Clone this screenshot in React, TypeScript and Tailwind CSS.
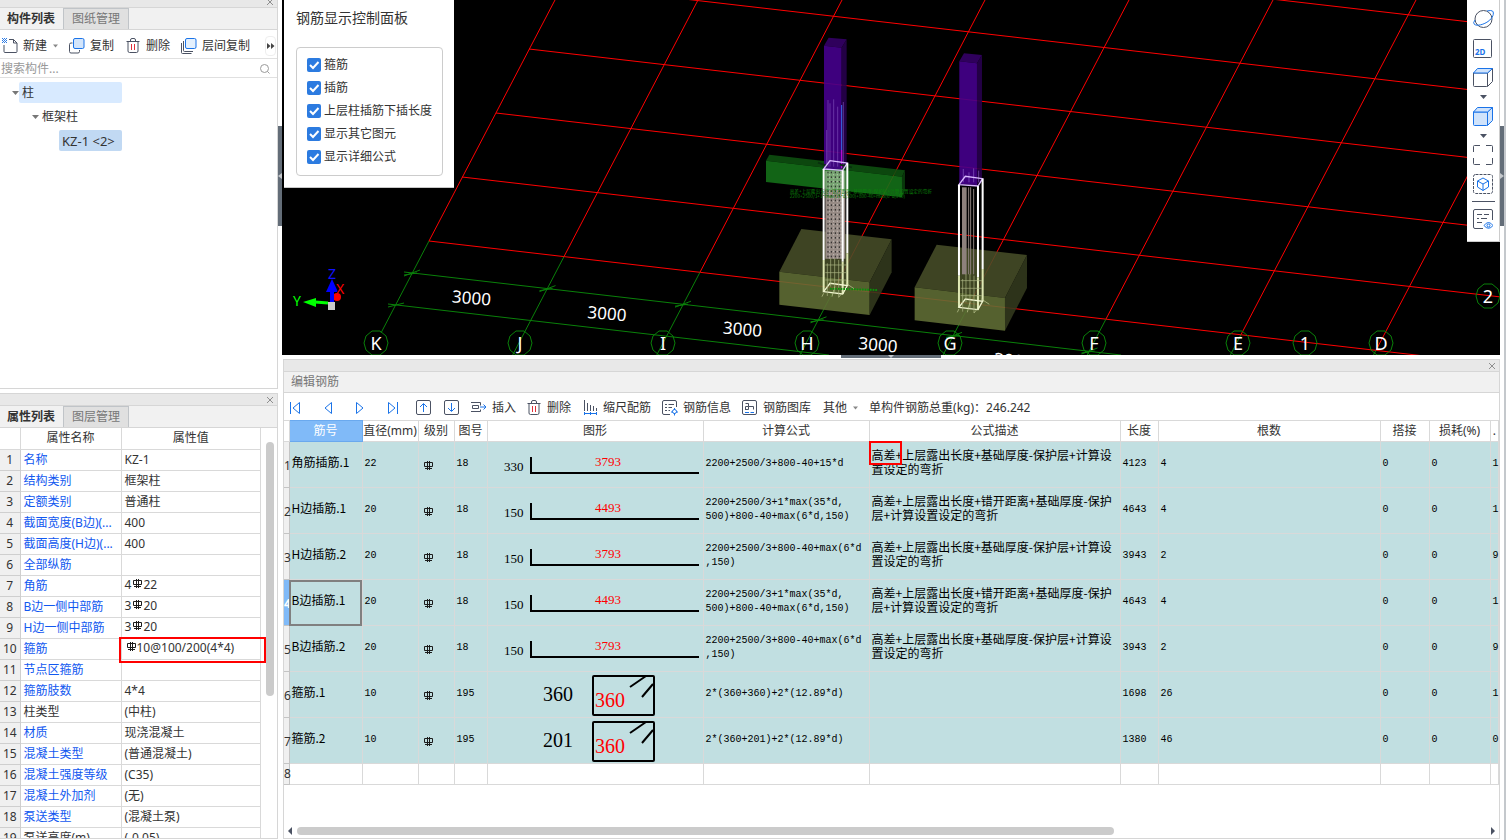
import type { ReactNode } from 'react';
import clsx from 'clsx';

type IconProps = { className?: string };

type Shape =
  | { kind: 'hook'; side: string; length: string }
  | { kind: 'stirrup'; side: string; length: string };

type RebarRow = {
  name: string;
  diameter: string;
  code: string;
  shape: Shape;
  formula: string[];
  description: string[];
  length: string;
  count: string;
  weight: string;
};

type PropertyRow = {
  name: string;
  value: string;
  rebar?: boolean;
  prefix?: string;
  plain?: boolean;
  marked?: boolean;
};

const DESC_BASE = ['高差+上层露出长度+基础厚度-保护层+计算设', '置设定的弯折'];
const DESC_STAGGERED = ['高差+上层露出长度+错开距离+基础厚度-保护', '层+计算设置设定的弯折'];
const FORMULA_SHORT = ['2200+2500/3+800-40+max(6*d', ',150)'];
const FORMULA_LONG = ['2200+2500/3+1*max(35*d,', '500)+800-40+max(6*d,150)'];

const REBARS: RebarRow[] = [
  { name: '角筋插筋.1', diameter: '22', code: '18', shape: { kind: 'hook', side: '330', length: '3793' }, formula: ['2200+2500/3+800-40+15*d'], description: DESC_BASE, length: '4123', count: '4', weight: '1' },
  { name: 'H边插筋.1', diameter: '20', code: '18', shape: { kind: 'hook', side: '150', length: '4493' }, formula: FORMULA_LONG, description: DESC_STAGGERED, length: '4643', count: '4', weight: '1' },
  { name: 'H边插筋.2', diameter: '20', code: '18', shape: { kind: 'hook', side: '150', length: '3793' }, formula: FORMULA_SHORT, description: DESC_BASE, length: '3943', count: '2', weight: '9' },
  { name: 'B边插筋.1', diameter: '20', code: '18', shape: { kind: 'hook', side: '150', length: '4493' }, formula: FORMULA_LONG, description: DESC_STAGGERED, length: '4643', count: '4', weight: '1' },
  { name: 'B边插筋.2', diameter: '20', code: '18', shape: { kind: 'hook', side: '150', length: '3793' }, formula: FORMULA_SHORT, description: DESC_BASE, length: '3943', count: '2', weight: '9' },
  { name: '箍筋.1', diameter: '10', code: '195', shape: { kind: 'stirrup', side: '360', length: '360' }, formula: ['2*(360+360)+2*(12.89*d)'], description: [], length: '1698', count: '26', weight: '1' },
  { name: '箍筋.2', diameter: '10', code: '195', shape: { kind: 'stirrup', side: '201', length: '360' }, formula: ['2*(360+201)+2*(12.89*d)'], description: [], length: '1380', count: '46', weight: '0' },
];

const PROPERTIES: PropertyRow[] = [
  { name: '名称', value: 'KZ-1' },
  { name: '结构类别', value: '框架柱' },
  { name: '定额类别', value: '普通柱' },
  { name: '截面宽度(B边)(...', value: '400' },
  { name: '截面高度(H边)(...', value: '400' },
  { name: '全部纵筋', value: '' },
  { name: '角筋', prefix: '4', value: '22', rebar: true },
  { name: 'B边一侧中部筋', prefix: '3', value: '20', rebar: true },
  { name: 'H边一侧中部筋', prefix: '3', value: '20', rebar: true },
  { name: '箍筋', value: '10@100/200(4*4)', rebar: true, marked: true },
  { name: '节点区箍筋', value: '' },
  { name: '箍筋肢数', value: '4*4' },
  { name: '柱类型', value: '(中柱)', plain: true },
  { name: '材质', value: '现浇混凝土' },
  { name: '混凝土类型', value: '(普通混凝土)' },
  { name: '混凝土强度等级', value: '(C35)' },
  { name: '混凝土外加剂', value: '(无)' },
  { name: '泵送类型', value: '(混凝土泵)' },
  { name: '泵送高度(m)', value: '(-0.05)', plain: true },
];

const DISPLAY_OPTIONS = ['箍筋', '插筋', '上层柱插筋下插长度', '显示其它图元', '显示详细公式'];

const COLUMNS = ['筋号', '直径(mm)', '级别', '图号', '图形', '计算公式', '公式描述', '长度', '根数', '搭接', '损耗(%)', '.'];

/* ---------- icons ---------- */

function NewIcon() {
  return (
    <svg width="16" height="16" viewBox="0 0 16 16" fill="none" stroke="#4b5263">
      <path d="M7 1.500h4.500l3.500 3.500v8.500q0 1-1 1h-11q-1 0-1-1V7M11.500 1.500V5H15" />
      <path d="M0 .5h6M0 2.500h6M0 4.500h6" stroke="#2c7be5" strokeDasharray="1 1" />
      <path d="M1 1.500h4M1 3.500h4" stroke="#2c7be5" strokeDasharray="1 1" />
    </svg>
  );
}

function CopyIcon() {
  return (
    <svg width="16" height="16" viewBox="0 0 16 16" fill="none">
      <path d="M3.500 5H2q-1.500 0-1.500 1.500v7q0 1.500 1.500 1.500h7q1.500 0 1.500-1.500V12" stroke="#4b5263" />
      <rect x="4.500" y=".5" width="10.500" height="10" rx="1.500" fill="#d3e5fb" stroke="#1a73e8" />
    </svg>
  );
}

function LayerCopyIcon() {
  return (
    <svg width="16" height="16" viewBox="0 0 16 16" fill="none">
      <path d="M2.500 3v9.500q0 1 1 1h8.500M.5 5v9.500q0 1 1 1h9" stroke="#4b5263" />
      <rect x="4.500" y=".5" width="10.500" height="10" rx="1.500" fill="#e4f0fd" stroke="#1a73e8" />
    </svg>
  );
}

function TrashIcon() {
  return (
    <svg width="15" height="16" viewBox="0 0 15 16" fill="none" stroke="#4b5263">
      <path d="M.5 3.500h13M4.500 3.500V2q0-1.500 1.500-1.500h2q1.500 0 1.500 1.500v1.500M2 3.500v9.500q0 1.500 1.500 1.500h7q1.500 0 1.500-1.500v-9.500" />
      <path d="M5.500 6v6M8.500 6v6" stroke="#e0303a" />
    </svg>
  );
}

function Caret({ className }: IconProps) {
  return (
    <svg className={className} width="7" height="4" viewBox="0 0 7 4" fill="currentColor">
      <path d="M0 0h7L3.500 4z" />
    </svg>
  );
}

function CloseIcon() {
  return (
    <svg width="8" height="8" viewBox="0 0 8 8" stroke="#8f8f8f">
      <path d="M1 1l6 6M7 1L1 7" />
    </svg>
  );
}

function SearchIcon() {
  return (
    <svg width="12" height="12" viewBox="0 0 12 12" fill="none" stroke="#9a9a9a">
      <circle cx="5.500" cy="5.500" r="4" />
      <path d="M8.500 8.500l2 2" />
    </svg>
  );
}

function StepIcon({ direction, edge }: { direction: 'prev' | 'next'; edge?: boolean }) {
  return (
    <svg
      className={clsx(direction === 'next' && 'rotate-180')}
      width="16"
      height="16"
      viewBox="0 0 16 16"
      fill="none"
      stroke="#1a73e8"
    >
      {edge && <path d="M2.500 2v12" />}
      <path d="M11.500 2.500v11L5 8z" />
    </svg>
  );
}

function MoveIcon({ down }: { down?: boolean }) {
  return (
    <svg width="16" height="16" viewBox="0 0 16 16" fill="none">
      <rect x=".5" y=".5" width="14" height="14" rx="1.500" stroke="#4b5263" />
      <path d={down ? 'M7.500 3V11M4 8l3.500 3.500L11 8' : 'M7.500 12V4M4 7l3.500-3.500L11 7'} stroke="#1a73e8" />
    </svg>
  );
}

function InsertIcon() {
  return (
    <svg width="16" height="14" viewBox="0 0 16 14" fill="none">
      <path d="M0 1.500h9.500v3M0 10.500h9.500v-2M1.500 4.500h6v3h-6z" stroke="#4b5263" />
      <path d="M9 6h6M12.500 3.500L15 6 12.500 8.500" stroke="#1a73e8" />
    </svg>
  );
}

function ScaleIcon() {
  return (
    <svg width="15" height="16" viewBox="0 0 15 16" fill="none">
      <path d="M1.500 0v11M4.500 3v8M7.500 5v6M10.500 6v5M13.500 8v3" stroke="#4b5263" />
      <path d="M1 13.500h13M1.500 12v3M13.500 12v3M7.500 12v3" stroke="#1a73e8" />
    </svg>
  );
}

function InfoIcon() {
  return (
    <svg width="16" height="16" viewBox="0 0 16 16" fill="none">
      <path d="M8 14.500H2q-1.500 0-1.500-1.500V2Q.5.500 2 .500h11q1.500 0 1.500 1.500v5" stroke="#4b5263" />
      <path d="M3 4.500h2M6.500 4.500H12M3 7.500h2M6.500 7.500H10M3 10.500h2M6.500 10.500H8" stroke="#4b5263" />
      <path d="M12.500 8v2M12.500 13v2.500M9 12h2M14 12h2" stroke="#1a73e8" />
      <circle cx="12.500" cy="11.500" r="2" stroke="#1a73e8" />
    </svg>
  );
}

function LibraryIcon() {
  return (
    <svg width="16" height="16" viewBox="0 0 16 16" fill="none">
      <rect x=".5" y=".5" width="14" height="14" rx="1.500" stroke="#4b5263" />
      <path d="M3.500 3.500h3v3M3 9.500h3.500v-3h-3v3M6.500 6.500h5v3" stroke="#4b5263" />
      <path d="M3 12.500h4M8.500 12.500H12" stroke="#1a73e8" />
    </svg>
  );
}

// Symbol of an HRB400 bar
function RebarIcon({ className }: IconProps) {
  return (
    <svg className={clsx('inline-block', className)} width="9" height="9" viewBox="0 0 9 9" fill="none" stroke="#1c1c1c">
      <path d="M3.500 0v9M5.500 0v9M.5 1.500h8v4h-8zM1 7.500h7" />
    </svg>
  );
}

function CubeIcon({ filled }: { filled?: boolean }) {
  return (
    <svg width="20" height="20" viewBox="0 0 20 20" fill="none" stroke={filled ? '#1a73e8' : '#4b5263'}>
      <path
        d="M.5 6h14v12.500q0 1-1 1h-12q-1 0-1-1zM14.500 6l5-4.500v13l-5 5z"
        fill={filled ? '#d0e3fb' : 'none'}
        strokeLinejoin="round"
      />
      <path d="M.5 6l4-4.500h15l-5 4.500z" fill="#d0e3fb" stroke="#1a73e8" strokeLinejoin="round" />
    </svg>
  );
}

function OrbitIcon() {
  return (
    <svg width="21" height="20" viewBox="0 0 21 20" fill="none">
      <circle cx="10.500" cy="10" r="8.500" stroke="#4b5263" />
      <path d="M2 11Q-.5 14 1.500 15.500C4 17 10 16 15 12.500S21.500 4 19.500 2Q18 1 14 2" stroke="#1a73e8" />
    </svg>
  );
}

function FlatIcon() {
  return (
    <svg width="20" height="20" viewBox="0 0 20 20" fill="none">
      <rect x=".5" y=".5" width="18" height="18" rx="1" stroke="#4b5263" />
      <text x="2" y="16" fill="#1a73e8" className="font-['Noto_Sans',sans-serif] text-[8px] font-bold">2D</text>
    </svg>
  );
}

function FrameIcon() {
  return (
    <svg width="20" height="20" viewBox="0 0 20 20" fill="none" stroke="#4b5263">
      <path d="M.5 7V1.500q0-1 1-1H7M13 .5h5.500q1 0 1 1V7M19.500 13v5.500q0 1-1 1H13M7 19.500H1.500q-1 0-1-1V13" />
    </svg>
  );
}

function IsolateIcon() {
  return (
    <svg width="20" height="20" viewBox="0 0 20 20" fill="none">
      <rect x=".5" y=".5" width="19" height="19" rx="2" stroke="#4b5263" strokeDasharray="3 1" />
      <path d="M10 4l5.500 3v6L10 16.500 4.500 13V7zM4.500 7L10 10l5.500-3M10 10v6.500" stroke="#1a73e8" />
    </svg>
  );
}

function ViewListIcon() {
  return (
    <svg width="20" height="20" viewBox="0 0 20 20" fill="none">
      <path d="M10 19.500H2q-1.500 0-1.500-1.500V2Q.5.500 2 .500h16q1.500 0 1.500 1.500v9" stroke="#4b5263" />
      <path d="M4 5.500h5M11 5.500h5M4 9.500h2M8 9.500h6M4 13.500h5" stroke="#4b5263" />
      <path d="M11 16.500q4.500-6 9 0-4.500 5.500-9 0z" stroke="#1a73e8" />
      <circle cx="15.500" cy="16.500" r="1.500" stroke="#1a73e8" />
    </svg>
  );
}

/* ---------- shared ---------- */

function PanelTitleBar() {
  return (
    <div className="flex justify-end items-center bg-[#e8e8e8] pr-[3px] border-[#d6d6d6] border-y h-[13px] shrink-0">
      <button type="button" aria-label="关闭"><CloseIcon /></button>
    </div>
  );
}

function PanelTabs({ tabs }: { tabs: [string, string] }) {
  return (
    <div className="flex bg-[#f1f1f1] border-[#d6d6d6] border-b h-[22px] shrink-0">
      <button type="button" className="pr-2 pl-[7px] border-[#c0c4c8] border-r font-bold text-[#333] whitespace-nowrap">
        {tabs[0]}
      </button>
      <button type="button" className="bg-[#e0e0e0] px-2 border-[#c0c4c8] border-t border-r text-[#777] whitespace-nowrap">
        {tabs[1]}
      </button>
    </div>
  );
}

function ToolButton({ icon, children, className }: { icon: ReactNode; children: ReactNode; className?: string }) {
  return (
    <button type="button" className={clsx('flex items-center gap-[5px] whitespace-nowrap', className)}>
      {icon}
      {children}
    </button>
  );
}

/* ---------- left side ---------- */

function ComponentPanel() {
  return (
    <section className="flex flex-col border-[#d6d6d6] border-r border-b min-h-0 overflow-hidden">
      <div className="flex justify-end items-center bg-[#e8e8e8] pr-[3px] pb-1 border-[#d6d6d6] border-b h-2 shrink-0">
        <button type="button" aria-label="关闭"><CloseIcon /></button>
      </div>
      <PanelTabs tabs={['构件列表', '图纸管理']} />

      <div className="flex items-center pt-[3px] pl-[2px] border-[#e0e0e0] border-b h-[29px] shrink-0">
        <ToolButton icon={<NewIcon />}>
          新建
          <Caret className="ml-[1px] w-[5px] text-[#888]" />
        </ToolButton>
        <ToolButton icon={<CopyIcon />} className="ml-[11px]">复制</ToolButton>
        <ToolButton icon={<TrashIcon />} className="ml-3">删除</ToolButton>
        <ToolButton icon={<LayerCopyIcon />} className="ml-[11px]">层间复制</ToolButton>
        <button type="button" aria-label="更多" className="flex justify-center items-center ml-auto mr-[1px] border border-[#eee] rounded w-[11px] h-5">
          <svg width="8" height="6" viewBox="0 0 8 6" fill="#444">
            <path d="M0 0l3.500 3L0 6zM4 0l3.500 3L4 6z" />
          </svg>
        </button>
      </div>

      <label className="flex items-center pt-[1px] pr-[6px] border-[#e0e0e0] border-b h-[19px] shrink-0">
        <span className="sr-only">搜索构件</span>
        <input
          type="text"
          placeholder="搜索构件..."
          className="flex-1 pl-[1px] outline-none min-w-0 h-[18px] placeholder:text-[#999] leading-[18px]"
        />
        <SearchIcon />
      </label>

      <ul className="flex flex-col gap-[3px] pt-1 text-[#333]">
        <li className="flex items-center pl-3">
          <Caret className="text-[#777]" />
          <button type="button" className="pl-[3px] rounded-xs bg-[#d8eaff] w-[103px] h-[21px] text-left">柱</button>
        </li>
        <li className="flex items-center gap-[3px] pl-8 h-[21px]">
          <Caret className="text-[#777]" />
          <button type="button">框架柱</button>
        </li>
        <li className="pl-[59px]">
          <button type="button" className="pl-[3px] rounded-xs bg-[#c1d9f3] w-[63px] h-[21px] text-[13px] text-left whitespace-nowrap">
            KZ-1 &lt;2&gt;
          </button>
        </li>
      </ul>
    </section>
  );
}

function PropertyPanel() {
  return (
    <section className="flex flex-col border-[#d6d6d6] border-r border-b min-h-0 overflow-hidden">
      <PanelTitleBar />
      <PanelTabs tabs={['属性列表', '图层管理']} />

      <div className="flex flex-1 min-h-0">
        <div className="flex-1 min-w-0">
          <table className="w-full text-[#333] border-collapse table-fixed">
            <colgroup>
              <col className="w-5" />
              <col className="w-[101px]" />
              <col />
            </colgroup>
            <thead>
              <tr className="h-[21px]">
                <th className="border-[#d9d9d9] border-r border-b" aria-label="序号" />
                <th className="p-0 border-[#d9d9d9] border-r border-b font-normal">属性名称</th>
                <th className="p-0 border-[#d9d9d9] border-r border-b font-normal">属性值</th>
              </tr>
            </thead>
            <tbody>
              {PROPERTIES.map((row, index) => (
                <tr key={row.name} className="h-[21px]">
                  <td className="bg-[#f0f0f0] p-0 border-[#cfcfcf] border-r border-b text-center">{index + 1}</td>
                  <td
                    className={clsx(
                      'p-0 pl-[3px] border-[#d9d9d9] border-r border-b whitespace-nowrap overflow-hidden',
                      !row.plain && 'text-[#1158f0]',
                    )}
                  >
                    {row.name}
                  </td>
                  <td className="relative p-0 pl-[3px] border-[#d9d9d9] border-r border-b whitespace-nowrap">
                    {row.prefix}
                    {row.rebar && <RebarIcon className="mr-[1px] mb-[6px] ml-[2px]" />}
                    {row.value}
                    {row.marked && (
                      <span className="-top-[2px] -right-[6px] -bottom-[4px] -left-[3px] z-10 absolute border-[#f00] border-2" />
                    )}
                  </td>
                </tr>
              ))}
            </tbody>
          </table>
        </div>
        <div className="pt-[14px] pl-[5px] w-4 shrink-0">
          <div className="bg-[#cbcbcb] rounded-full w-2 h-[254px]" />
        </div>
      </div>
    </section>
  );
}

/* ---------- 3D view ---------- */

const AXIS_LETTERS = ['K', 'J', 'I', 'H', 'G', 'F', 'E', 'D'];
const AXIS_TOPS = [555, 698, 842, 985, 1129, 1273, 1416, 1560];
const AXIS_ENDS = [429, 564, 700, 835, 970, 1106, 1241, 1376];
const ROW_STARTS = [[596, -79], [563, -15], [529, 49], [496, 113], [462, 177], [429, 241]];

function AxisBubble({ x, y, label }: { x: number; y: number; label: string }) {
  return (
    <g>
      <path
        d="M-12 0L-10-7-4-12H4L10-7 12 0 10 7 4 12H-4L-10 7z"
        transform={`translate(${x} ${y})`}
        fill="none"
        stroke="#0a800a"
      />
      <text x={x} y={y + 7} textAnchor="middle" fill="#fff" className="text-[18px]">{label}</text>
    </g>
  );
}

function Footing() {
  return (
    <g fillOpacity=".88">
      <path d="M118 755L184 627 455 658 389 787z" fill="#474d28" />
      <path d="M118 755L389 787V885L118 854z" fill="#616e36" />
      <path d="M389 787L455 658V757L389 885z" fill="#333a1e" />
    </g>
  );
}

function UpperColumn() {
  return (
    <g fillOpacity=".9">
      <path d="M252 77L266 53 320 58 305 83z" fill="#340066" />
      <path d="M252 77L305 83V448L252 446z" fill="#45008c" />
      <path d="M305 83L320 58V430L305 448z" fill="#27004d" />
    </g>
  );
}

function ColumnCage() {
  return (
    <g fill="none">
      <path d="M251 447L308 451 322 429 270 422z" stroke="#d9b8ff" strokeWidth="4" />
      <path d="M251 447V720M308 451V725M322 429V700" stroke="#fff" strokeWidth="6" />
      <path d="M251 720V815M308 725V822M322 700V797" stroke="#dfe8b4" strokeWidth="6" />
      <path d="M251 815L308 822 322 797 270 790z" stroke="#f0f5d0" strokeWidth="4" />
      <path d="M262 730V828M272 715V800M284 715V822M296 720V832M256 735H320M256 758H320M256 780H320" stroke="#aeb785" strokeWidth="2" />
      <path d="M251 820L246 830M284 800L276 830M306 820L296 832M318 790L342 806" stroke="#c5cf98" strokeWidth="2" />
    </g>
  );
}

function SceneDrawing() {
  return (
    <svg
      className="block w-full h-full font-['Noto_Sans',sans-serif]"
      viewBox="282 0 1218 355"
      preserveAspectRatio="xMinYMin slice"
      role="img"
      aria-label="三维视图"
    >
      <g stroke="#f00" strokeWidth="1">
        {AXIS_TOPS.map((top, i) => (
          <line key={top} x1={top} y1={0} x2={AXIS_ENDS[i]} y2={241 + i * 15.6} />
        ))}
        {ROW_STARTS.map(([x, y]) => (
          <line key={x} x1={x} y1={y} x2={1500} y2={y + (1500 - x) * 0.1155} />
        ))}
      </g>

      <g stroke="#0a800a" strokeWidth="1">
        {AXIS_ENDS.map((end, i) => {
          const top = 241 + i * 15.6;
          const bottom = i === 0 ? 333 : 355;
          return <line key={end} x1={end} y1={top} x2={end - (bottom - top) * 0.522} y2={bottom} />;
        })}
        <path d="M404 272L1121 355M388 304L829 355" />
        {[0, 1, 2, 3, 4, 5].map(i => (
          <path key={i} d="M-8 3L8-3M-8 2L5 0" transform={`translate(${412 + i * 135.500} ${273 + i * 15.600})`} />
        ))}
        <path d="M388 307L404 303" />
      </g>

      <g transform="translate(740 20) scale(.3333)">
        <g fillOpacity=".9">
          <path d="M78 422L88 404 495 451 486 470z" fill="#0d4f10" />
          <path d="M78 422L486 470V532L78 486z" fill="#146f18" />
          <path d="M486 470L495 451V512L486 532z" fill="#0a3d0c" />
        </g>
        <Footing />
        <UpperColumn />
        <path d="M264 240V440M270 250V440M281 238V440M293 260V440M310 246V440M260 330V440" stroke="#7c4bb8" strokeWidth="2" />
        <path d="M305 255V390" stroke="#3a6ff0" strokeWidth="3" />
        <path d="M305 390V445" stroke="#b010d0" strokeWidth="4" />
        <path d="M256 452H316V716H256z" fill="#978b85" />
        <path d="M256 452H316V510H256z" fill="#69b06a" fillOpacity=".7" />
        <path d="M264 455V716M274 455V716M286 455V716M298 455V716" stroke="#222" strokeWidth="3" strokeDasharray="5 9" />
        <path d="M269 462V716M281 462V716M292 462V716M303 462V716" stroke="#d6d0cc" strokeWidth="2" strokeDasharray="4 6" />
        <path d="M234 428L262 438M300 434L336 442" stroke="#0a3010" strokeWidth="5" />
        <ColumnCage />
        <path d="M270 806L412 810" stroke="#0a900a" strokeWidth="6" strokeDasharray="5 3" />
        <g fill="#0a800a" className="font-['Noto_Sans_CJK_SC',sans-serif] text-[14px]">
          <text x="149" y="518">高差+上层露出长度+错开距离+基础厚度-保护层+计算设置设定的弯折</text>
          <text x="149" y="533">2200+2500/3+1*max(35*d,500)+800-40+max(6*d,150)</text>
        </g>

        <g transform="translate(406 47)">
          <Footing />
          <UpperColumn />
          <path d="M264 400V440M281 410V440M295 398V440M310 405V440" stroke="#8a5cc4" strokeWidth="2" />
          <path d="M260 455H274V716H260z" fill="#8d817c" />
          <path d="M280 455V716M286 455V716M295 460V716" stroke="#8d817c" strokeWidth="3" />
          <ColumnCage />
        </g>
      </g>

      <g fill="#fff" className="text-[17px]">
        {[0, 1, 2, 3, 4].map(i => (
          <text key={i} textAnchor="middle" transform={`translate(${471 + i * 135.500} ${304 + i * 15.600}) rotate(5)`}>
            3000
          </text>
        ))}
      </g>
      {AXIS_LETTERS.map((letter, i) => (
        <AxisBubble key={letter} x={Math.round(376 + i * 143.600)} y={343} label={letter} />
      ))}
      <AxisBubble x={1305} y={343} label="1" />
      <AxisBubble x={1488} y={296} label="2" />

      <g className="text-[14px]">
        <path d="M328 303L315 302" stroke="#0f0" strokeWidth="3" />
        <path d="M303 302L316 298V307z" fill="#0f0" />
        <circle cx="337" cy="297" r="4" fill="#f00" />
        <path d="M332 304V290" stroke="#00f" strokeWidth="4" />
        <path d="M326 292L332 279 338 292z" fill="#00f" />
        <path d="M328 302H335V310H328z" fill="#c8c8c8" />
        <text x="293" y="306" fill="#0f0">Y</text>
        <text x="328" y="279" fill="#11f">Z</text>
        <text x="336" y="294" fill="#f00">X</text>
      </g>
    </svg>
  );
}

function DisplayPanel() {
  return (
    <form className="top-0 left-[2px] absolute bg-white pt-2 pr-[11px] pb-[11px] pl-3 border-[#c8c8c8] border-b">
      <h2 className="mb-[19px] text-[#333] text-[14px] leading-5">钢筋显示控制面板</h2>
      <div className="flex flex-col gap-[5px] px-[10px] pt-2 pb-[9px] border border-[#ccc] rounded-sm">
        {DISPLAY_OPTIONS.map(option => (
          <label key={option} className="flex items-center gap-[3px] h-[18px] whitespace-nowrap">
            <span className="grid">
              <input
                type="checkbox"
                defaultChecked
                className="col-start-1 row-start-1 bg-[#2c7be0] rounded-xs w-[14px] h-[14px] appearance-none"
              />
              <svg className="col-start-1 row-start-1 pointer-events-none" width="14" height="14" viewBox="0 0 14 14" fill="none" stroke="#fff" strokeWidth="2">
                <path d="M3 7l3 3 5.500-6" />
              </svg>
            </span>
            {option}
          </label>
        ))}
      </div>
    </form>
  );
}

function ViewToolbar() {
  return (
    <div className="top-0 right-0 absolute flex flex-col items-center bg-white pt-[9px] pb-3 border-[#ccc] border-r border-b w-[33px] text-[#4b5263]">
      <button type="button" aria-label="动态观察"><OrbitIcon /></button>
      <button type="button" aria-label="二维" className="mt-[10px]"><FlatIcon /></button>
      <button type="button" aria-label="视角" className="flex flex-col items-center gap-2 mt-2">
        <CubeIcon />
        <Caret />
      </button>
      <button type="button" aria-label="显示方式" className="flex flex-col items-center gap-2 mt-[7px]">
        <CubeIcon filled />
        <Caret />
      </button>
      <button type="button" aria-label="全屏" className="mt-[7px]"><FrameIcon /></button>
      <button type="button" aria-label="隔离显示" className="mt-[9px]"><IsolateIcon /></button>
      <hr className="my-[7px] border-[#4b5263] w-[23px]" />
      <button type="button" aria-label="显示设置"><ViewListIcon /></button>
    </div>
  );
}

/* ---------- rebar editor ---------- */

function RebarShape({ shape }: { shape: Shape }) {
  if (shape.kind === 'hook') {
    return (
      <svg className="block font-['Liberation_Serif',serif] text-[13px]" width="215" height="45" viewBox="0 0 215 45">
        <path d="M43 15V31H211" fill="none" stroke="#000" strokeWidth="2" />
        <text x="16" y="29">{shape.side}</text>
        <text x="107" y="24" fill="#f00">{shape.length}</text>
      </svg>
    );
  }

  return (
    <svg className="block font-['Liberation_Serif',serif] text-[20px]" width="215" height="45" viewBox="0 0 215 45">
      <rect x="105" y="4" width="61" height="39" rx="1" fill="none" stroke="#000" strokeWidth="2" />
      <path d="M142 15L158 4M154 25L165 12" stroke="#000" strokeWidth="2" />
      <text x="55" y="29">{shape.side}</text>
      <text x="107" y="35" fill="#f00">{shape.length}</text>
    </svg>
  );
}

function EditorToolbar() {
  return (
    <div className="flex items-center pt-[2px] pl-1 h-[27px] text-[#333] shrink-0">
      <div className="flex items-center gap-4">
        <button type="button" aria-label="第一条"><StepIcon direction="prev" edge /></button>
        <button type="button" aria-label="上一条"><StepIcon direction="prev" /></button>
        <button type="button" aria-label="下一条"><StepIcon direction="next" /></button>
        <button type="button" aria-label="最后一条"><StepIcon direction="next" edge /></button>
        <button type="button" aria-label="上移"><MoveIcon /></button>
      </div>
      <button type="button" aria-label="下移" className="ml-3"><MoveIcon down /></button>
      <ToolButton icon={<InsertIcon />} className="ml-[11px]">插入</ToolButton>
      <ToolButton icon={<TrashIcon />} className="ml-[11px]">删除</ToolButton>
      <ToolButton icon={<ScaleIcon />} className="ml-3">缩尺配筋</ToolButton>
      <ToolButton icon={<InfoIcon />} className="ml-[11px]">钢筋信息</ToolButton>
      <ToolButton icon={<LibraryIcon />} className="ml-[11px]">钢筋图库</ToolButton>
      <button type="button" className="flex items-center gap-[6px] ml-3 whitespace-nowrap">
        其他
        <Caret className="w-[5px] text-[#888]" />
      </button>
      <span className="ml-[11px] whitespace-nowrap">单构件钢筋总重(kg)：246.242</span>
    </div>
  );
}

function RebarTable() {
  const cell = 'border-[#d9d9d9] border-r border-b whitespace-nowrap';
  const mono = "p-0 pb-[2px] pl-[2px] font-['Liberation_Mono',monospace] text-[10px] leading-[14px]";
  const song = "p-0 pb-[5px] pl-[2px] font-['Noto_Sans_CJK_SC',sans-serif] leading-[14px]";

  return (
    <table className="bg-white w-full text-black border-collapse table-fixed">
      <colgroup>
        <col className="w-[5px]" />
        <col className="w-[73px]" />
        <col className="w-[56px]" />
        <col className="w-[36px]" />
        <col className="w-[33px]" />
        <col className="w-[216px]" />
        <col className="w-[166px]" />
        <col className="w-[251px]" />
        <col className="w-[38px]" />
        <col className="w-[222px]" />
        <col className="w-[49px]" />
        <col className="w-[61px]" />
        <col />
      </colgroup>
      <thead>
        <tr className="h-[21px] text-[#333]">
          <th className="p-0 border-[#d9d9d9] border-y border-r" aria-label="序号" />
          {COLUMNS.map((title, index) => (
            <th
              key={title}
              className={clsx(
                'p-0 border-y border-r font-normal whitespace-nowrap',
                index === 0 ? 'bg-[#80baf8] border-[#6aa9ee] text-white font-bold' : 'border-[#d9d9d9]',
              )}
            >
              {title}
            </th>
          ))}
        </tr>
      </thead>
      <tbody>
        {REBARS.map((row, index) => {
          const current = index === 3;

          return (
            <tr key={row.name} className="bg-[#c1dfe1] h-[46px]">
              <td
                className={clsx(
                  'p-0 pt-[3px] border-[#c4c4c4] border-r border-b',
                  current ? 'bg-[#80baf8] text-white font-bold' : 'bg-[#f0f0f0] text-[#333]',
                )}
              >
                {index + 1}
              </td>
              <td className={clsx(cell, song, current && 'outline-2 -outline-offset-2 outline-[#808080]')}>
                {row.name}
              </td>
              <td className={clsx(cell, mono)}>{row.diameter}</td>
              <td className={clsx(cell, 'p-0 pl-[5px]')}><RebarIcon /></td>
              <td className={clsx(cell, mono)}>{row.code}</td>
              <td className={clsx(cell, 'p-0')}><RebarShape shape={row.shape} /></td>
              <td className={clsx(cell, mono)}>
                {row.formula.map(line => <div key={line}>{line}</div>)}
              </td>
              <td className={clsx(cell, song, 'relative')}>
                {row.description.map(line => <div key={line}>{line}</div>)}
                {index === 0 && (
                  <span className="-top-[1px] -left-[1px] absolute border-[#f00] border-2 w-[33px] h-6" />
                )}
              </td>
              <td className={clsx(cell, mono)}>{row.length}</td>
              <td className={clsx(cell, mono)}>{row.count}</td>
              <td className={clsx(cell, mono)}>0</td>
              <td className={clsx(cell, mono)}>0</td>
              <td className={clsx(cell, mono)}>{row.weight}</td>
            </tr>
          );
        })}
        <tr className="h-[21px]">
          <td className="bg-[#f0f0f0] p-0 border-[#c4c4c4] border-r border-b text-[#333]">8</td>
          {COLUMNS.map(title => <td key={title} className={clsx(cell, 'p-0')} />)}
        </tr>
      </tbody>
    </table>
  );
}

function RebarEditor() {
  return (
    <section className="flex flex-col flex-1 ml-[1px] border-[#d6d6d6] border-r border-b border-l min-h-0 overflow-hidden">
      <PanelTitleBar />
      <h2 className="bg-[#f1f1f1] pl-[7px] border-[#d6d6d6] border-b h-[21px] text-[#777] leading-5 shrink-0">编辑钢筋</h2>
      <EditorToolbar />
      <div className="flex-1 min-h-0 overflow-hidden">
        <RebarTable />
      </div>
      <div className="flex items-center gap-[5px] px-1 pt-[1px] h-4 text-[#4b5263] shrink-0">
        <svg width="4" height="8" viewBox="0 0 4 8" fill="currentColor"><path d="M4 0v8L0 4z" /></svg>
        <div className="flex-1">
          <div className="bg-[#cbcbcb] rounded-full w-11/16 h-2" />
        </div>
        <svg width="4" height="8" viewBox="0 0 4 8" fill="currentColor"><path d="M0 0v8l4-4z" /></svg>
      </div>
    </section>
  );
}

/* ---------- page ---------- */

function SideSplitter({ flip }: { flip?: boolean }) {
  return (
    <div className="pt-[126px] w-1 shrink-0">
      <div className="flex justify-center items-center bg-[#636d78] h-[100px]">
        <svg className={clsx(flip && 'rotate-180')} width="4" height="6" viewBox="0 0 4 6" fill="#c4c8cc">
          <path d="M4 0v6L0 3z" />
        </svg>
      </div>
    </div>
  );
}

export default function App() {
  return (
    <div className="flex bg-white h-screen overflow-hidden font-['Noto_Sans','Noto_Sans_CJK_SC',sans-serif] text-[#333] text-[12px] leading-4">
      <aside className="gap-1 grid grid-rows-[389fr_446fr] pb-[1px] w-[278px] min-h-0 shrink-0">
        <ComponentPanel />
        <PropertyPanel />
      </aside>

      <SideSplitter />

      <main className="grid flex-1 grid-rows-[355fr_485fr] min-w-0">
        <div className="relative bg-black min-h-0 overflow-hidden">
          <SceneDrawing />
          <DisplayPanel />
          <ViewToolbar />
        </div>
        <div className="flex flex-col pb-[1px] min-h-0">
          <div className="flex justify-center items-start mb-[1px] h-[3px] shrink-0">
            <div className="flex justify-center bg-[#636d78] w-[100px] h-full">
              <svg width="6" height="3" viewBox="0 0 6 3" fill="#c4c8cc"><path d="M0 0h6L3 3z" /></svg>
            </div>
          </div>
          <RebarEditor />
        </div>
      </main>

      <SideSplitter flip />
      <div className="border-[#c4c8cc] border-l-2 w-1 shrink-0" />
    </div>
  );
}
